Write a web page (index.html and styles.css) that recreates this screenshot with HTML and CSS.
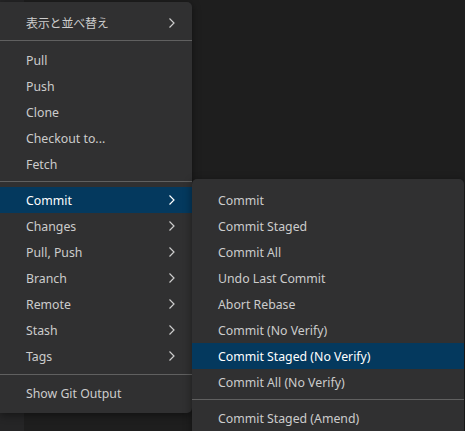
FILE: index.html
```html
<!DOCTYPE html>
<html lang="ja">
<head>
<meta charset="utf-8">
<link rel="stylesheet" href="styles.css">
</head>
<body>
<div class="workbench">
  <div class="sidebar"></div>
  <div class="editor"></div>
</div>

<div class="menu main-menu">
  <div class="item"><span class="label cjk">表示と並べ替え</span><svg class="chev" viewBox="0 0 16 16"><polyline points="5.5,3.5 10,8 5.5,12.5"/></svg></div>
  <div class="sep sep-first"></div>
  <div class="item"><span class="label">Pull</span></div>
  <div class="item"><span class="label">Push</span></div>
  <div class="item"><span class="label">Clone</span></div>
  <div class="item"><span class="label">Checkout to...</span></div>
  <div class="item"><span class="label">Fetch</span></div>
  <div class="sep"></div>
  <div class="item active"><span class="label">Commit</span><svg class="chev" viewBox="0 0 16 16"><polyline points="5.5,3.5 10,8 5.5,12.5"/></svg></div>
  <div class="item"><span class="label">Changes</span><svg class="chev" viewBox="0 0 16 16"><polyline points="5.5,3.5 10,8 5.5,12.5"/></svg></div>
  <div class="item"><span class="label">Pull, Push</span><svg class="chev" viewBox="0 0 16 16"><polyline points="5.5,3.5 10,8 5.5,12.5"/></svg></div>
  <div class="item"><span class="label">Branch</span><svg class="chev" viewBox="0 0 16 16"><polyline points="5.5,3.5 10,8 5.5,12.5"/></svg></div>
  <div class="item"><span class="label">Remote</span><svg class="chev" viewBox="0 0 16 16"><polyline points="5.5,3.5 10,8 5.5,12.5"/></svg></div>
  <div class="item"><span class="label">Stash</span><svg class="chev" viewBox="0 0 16 16"><polyline points="5.5,3.5 10,8 5.5,12.5"/></svg></div>
  <div class="item"><span class="label">Tags</span><svg class="chev" viewBox="0 0 16 16"><polyline points="5.5,3.5 10,8 5.5,12.5"/></svg></div>
  <div class="sep sep-last"></div>
  <div class="item"><span class="label">Show Git Output</span></div>
</div>

<div class="menu sub-menu">
  <div class="item"><span class="label">Commit</span></div>
  <div class="item"><span class="label">Commit Staged</span></div>
  <div class="item"><span class="label">Commit All</span></div>
  <div class="item"><span class="label">Undo Last Commit</span></div>
  <div class="item"><span class="label">Abort Rebase</span></div>
  <div class="item"><span class="label">Commit (No Verify)</span></div>
  <div class="item active"><span class="label">Commit Staged (No Verify)</span></div>
  <div class="item"><span class="label">Commit All (No Verify)</span></div>
  <div class="sep"></div>
  <div class="item"><span class="label">Commit Staged (Amend)</span></div>
</div>
</body>
</html>
```

FILE: styles.css
```css
html, body {
  margin: 0;
  padding: 0;
  width: 465px;
  height: 431px;
  overflow: hidden;
  background: #1e1e1e;
  font-family: "Noto Sans", "Noto Sans CJK JP", sans-serif;
  font-size: 12.3px;
}

.workbench {
  display: flex;
  height: 431px;
}

.sidebar {
  width: 24px;
  background: #252526;
}

.editor {
  flex: 1;
  background: #1e1e1e;
}

.menu {
  position: absolute;
  background: #303031;
  color: #cccccc;
  border-radius: 0 5px 5px 0;
  box-shadow: 0 2px 8px rgba(0, 0, 0, 0.45);
  box-sizing: border-box;
  display: flex;
  flex-direction: column;
  overflow: hidden;
}

.main-menu {
  left: 0;
  top: 2px;
  width: 192px;
  height: 411px;
  padding-top: 8px;
}

.sub-menu {
  left: 192px;
  top: 179px;
  width: 272px;
  height: 270px;
  padding-top: 8px;
  border-radius: 5px;
}

.item {
  height: 26px;
  flex: none;
  display: flex;
  align-items: center;
  justify-content: space-between;
  padding: 0 12px 0 26px;
  white-space: nowrap;
}

.item.active {
  background: #04395e;
  color: #ffffff;
}

.label {
  line-height: 26px;
  padding-top: 2px;
}

.cjk {
  font-size: 12px;
  letter-spacing: -0.2px;
}

.chev {
  width: 16px;
  height: 16px;
  fill: none;
  stroke: currentColor;
  stroke-width: 1.2;
}

.sep {
  flex: none;
  height: 1px;
  background: #606060;
  margin: 4px 0 5px;
}

.sep-first {
  margin: 4px 0 6px;
}

.sep-last {
  margin: 4.5px 0 5.5px;
}
```
